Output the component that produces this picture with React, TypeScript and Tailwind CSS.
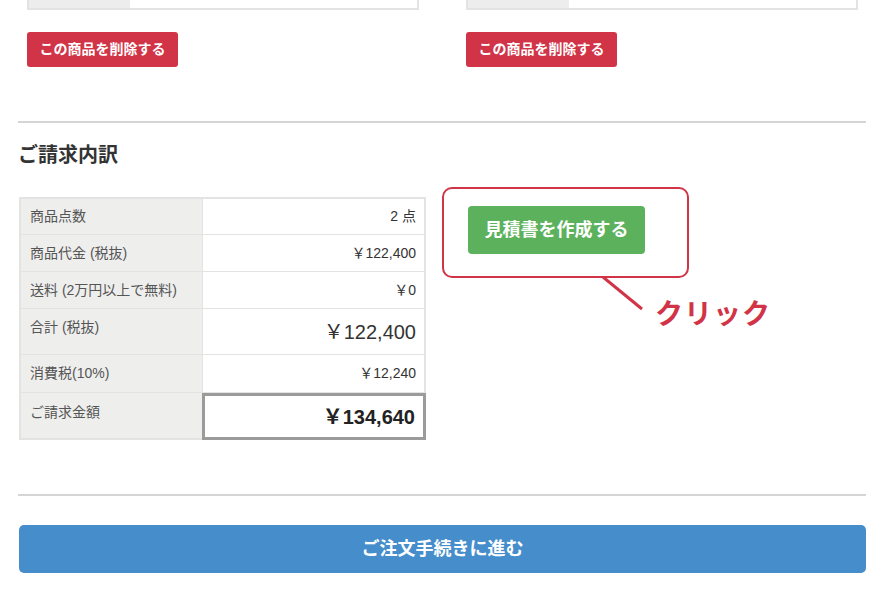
import React from 'react';

const font = { fontFamily: '"Liberation Sans", "Noto Sans CJK JP", sans-serif' };

// 明細の行
const rows = [
  { label: '商品点数', value: '2 点', size: 'text-[14px]', h: 'h-[35px]' },
  { label: '商品代金 (税抜)', value: '￥122,400', size: 'text-[14px]', h: 'h-[37px]' },
  { label: '送料 (2万円以上で無料)', value: '￥0', size: 'text-[14px]', h: 'h-[37px]' },
  { label: '合計 (税抜)', value: '￥122,400', size: 'text-[20px]', h: 'h-[46px]' },
  { label: '消費税(10%)', value: '￥12,240', size: 'text-[14px]', h: 'h-[38px]' },
];

const ItemStub = () => (
  <div>
    <div className="flex h-[10px] border-x-2 border-b-2 border-[#e3e3e3]">
      <div className="w-[101px] bg-[#ededed]" />
      <div className="flex-1 bg-white" />
    </div>
    <button className="mt-[22px] h-[35px] w-[151px] rounded-[3px] bg-[#d13447] text-[14px] font-bold text-white">
      この商品を削除する
    </button>
  </div>
);

export default function App() {
  return (
    <div className="h-[598px] w-[892px] overflow-hidden bg-white text-[#333]" style={font}>
      <div className="grid grid-cols-2 gap-[47px] pl-[27px] pr-[34px]">
        <ItemStub />
        <ItemStub />
      </div>

      <div className="ml-[18px] mr-[26px] mt-[54px] h-[2px] bg-[#d5d5d5]" />

      <h2 className="ml-[18px] mt-[19px] text-[20px] font-bold leading-[26px] text-[#333]">ご請求内訳</h2>

      <div className="mt-[29px] flex pl-[19px]">
        <div className="w-[407px] border-2 border-[#e3e3e3]">
          {rows.map((row, i) => (
            <div key={row.label} className={`flex ${row.h} ${i > 0 ? 'border-t border-[#e3e3e3]' : ''}`}>
              <div className={`w-[181px] bg-[#eeeeed] pl-[9px] ${i === 0 ? 'pt-[9px]' : 'pt-[10px]'} text-[14px] leading-[17px] text-[#555]`}>
                {row.label}
              </div>
              <div className={`flex flex-1 items-center justify-end border-l border-[#e3e3e3] bg-white pr-[8px] ${row.size} text-[#333]`}>
                {row.value}
              </div>
            </div>
          ))}
          <div className="flex h-[46px] border-t border-[#e3e3e3]">
            <div className="w-[181px] bg-[#eeeeed] pl-[9px] pt-[11px] text-[14px] leading-[17px] text-[#555]">
              ご請求金額
            </div>
            <div className="-mb-[2px] -mr-[2px] flex flex-1 items-center justify-end border-[3px] border-[#9b9b9b] bg-white pr-[8px] text-[20px] font-bold text-[#222]">
              ￥134,640
            </div>
          </div>
        </div>

        <div className="relative ml-[16px] -mt-[10px]">
          <div className="h-[91px] w-[247px] rounded-[10px] border-2 border-[#d13447] pl-[24px] pt-[17px]">
            <button className="h-[48px] w-[177px] rounded-[4px] bg-[#5cb15d] text-[18px] font-bold text-white">
              見積書を作成する
            </button>
          </div>
          <svg className="absolute left-[159px] top-[89px]" width="44" height="36" viewBox="0 0 44 36">
            <line x1="2" y1="1" x2="41" y2="33" stroke="#d13447" strokeWidth="3" />
          </svg>
          <span className="absolute left-[213px] top-[111px] whitespace-nowrap text-[28px] font-bold leading-[34px] tracking-[1px] text-[#d13447]">
            クリック
          </span>
        </div>
      </div>

      <div className="ml-[18px] mr-[26px] mt-[54px] h-[2px] bg-[#d5d5d5]" />

      <div className="pl-[19px] pr-[26px] pt-[29px]">
        <button className="h-[48px] w-full rounded-[5px] bg-[#468dcb] text-[18px] font-bold text-white">
          ご注文手続きに進む
        </button>
      </div>
    </div>
  );
}
